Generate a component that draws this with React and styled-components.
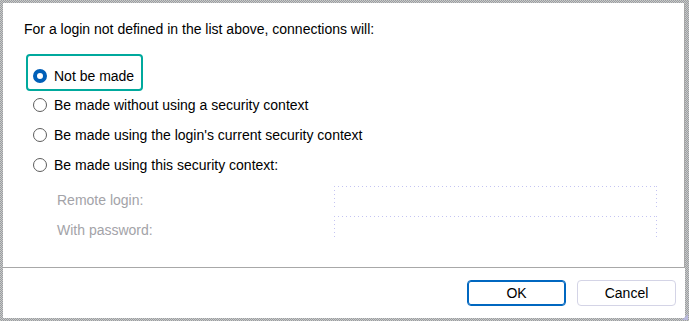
import styled, { createGlobalStyle } from "styled-components";

const GlobalStyle = createGlobalStyle`
  html, body {
    margin: 0;
    padding: 0;
    background: #ffffff;
  }
  body {
    font-family: "Liberation Sans", Arial, sans-serif;
    font-size: 14px;
    color: #000000;
  }
`;

const options = [
  { id: "none", label: "Not be made" },
  { id: "nocontext", label: "Be made without using a security context" },
  { id: "current", label: "Be made using the login's current security context" },
  { id: "this", label: "Be made using this security context:" },
];

const App = () => {
  const selected = "none";
  return (
    <>
      <GlobalStyle />
      <Frame>
        <Window>
          <Panel>
            <Heading>For a login not defined in the list above, connections will:</Heading>
            <RadioList>
              {options.map((o) => (
                <RadioRow key={o.id} focused={o.id === selected}>
                  <Radio checked={o.id === selected} />
                  <span>{o.label}</span>
                </RadioRow>
              ))}
            </RadioList>
            <ContextForm>
              <FieldLabel>Remote login:</FieldLabel>
              <FieldBox />
              <FieldLabel>With password:</FieldLabel>
              <FieldBox />
            </ContextForm>
          </Panel>
          <Footer>
            <Button primary>OK</Button>
            <Button>Cancel</Button>
          </Footer>
        </Window>
        <Grip />
      </Frame>
    </>
  );
};

const Frame = styled.div`
  position: relative;
  width: 689px;
  height: 321px;
  box-sizing: border-box;
  padding: 3px 4px 3px 3px;
  background: repeating-conic-gradient(#9a9aa6 0 25%, #c9cdc4 0 50%) 0 0 / 2px 2px;
`;

const Window = styled.div`
  height: 100%;
  background: #ffffff;
  display: flex;
  flex-direction: column;
`;

const Panel = styled.div`
  height: 265px;
  box-sizing: border-box;
  border-right: 1px solid #a8a8a8;
  border-bottom: 1px solid #a8a8a8;
  padding: 15px 0 0 21px;
`;

const Heading = styled.div`
  height: 22px;
  line-height: 22px;
`;

const RadioList = styled.div`
  display: flex;
  flex-direction: column;
  align-items: flex-start;
  margin-top: 14px;
  margin-left: 2px;
`;

const RadioRow = styled.div`
  display: inline-flex;
  align-items: center;
  gap: 7px;
  box-sizing: border-box;
  border-radius: 4px;
  padding: ${(p) => (p.focused ? "6px 9px 0 7px" : "0 0 0 7px")};
  height: ${(p) => (p.focused ? "37px" : "30px")};
  margin-bottom: ${(p) => (p.focused ? "-1px" : "0")};
  outline: ${(p) => (p.focused ? "2px solid #00a99d" : "none")};
  outline-offset: -2px;
`;

const Radio = styled.span`
  width: 14px;
  height: 14px;
  box-sizing: border-box;
  border-radius: 50%;
  flex: none;
  background: #ffffff;
  border: ${(p) => (p.checked ? "4px solid #005fb8" : "1px solid #5d5d5d")};
`;

const ContextForm = styled.div`
  display: grid;
  grid-template-columns: 277px 323px;
  grid-auto-rows: 30px;
  margin-left: 33px;
  margin-top: 6px;
`;

const FieldLabel = styled.div`
  align-self: center;
  padding-bottom: 2px;
  color: #a3a3a8;
`;

const FieldBox = styled.div`
  height: 21px;
  background:
    repeating-linear-gradient(to right, #c4c4f2 0 1px, transparent 1px 4px) top left / 100% 1px no-repeat,
    repeating-linear-gradient(to bottom, #c4c4f2 0 1px, transparent 1px 4px) top left / 1px 100% no-repeat,
    repeating-linear-gradient(to bottom, #c4c4f2 0 1px, transparent 1px 4px) top right / 1px 100% no-repeat;
`;

const Footer = styled.div`
  flex: 1;
  display: flex;
  justify-content: flex-end;
  align-items: flex-start;
  gap: 11px;
  padding: 12px 9px 0 0;
`;

const Button = styled.button`
  width: 99px;
  height: 26px;
  box-sizing: border-box;
  background: #ffffff;
  border-radius: 4px;
  border: 1px solid ${(p) => (p.primary ? "#0067c0" : "#d4d4e6")};
  box-shadow: ${(p) => (p.primary ? "inset 0 0 0 1px #0067c0" : "none")};
  font-family: "Liberation Sans", Arial, sans-serif;
  font-size: 14px;
  color: #000000;
  padding: 0;
`;

const Grip = styled.div`
  position: absolute;
  right: 1px;
  bottom: 1px;
  width: 0;
  height: 0;
  border-left: 6px solid transparent;
  border-bottom: 6px solid #b9b9dc;
`;

export default App;
